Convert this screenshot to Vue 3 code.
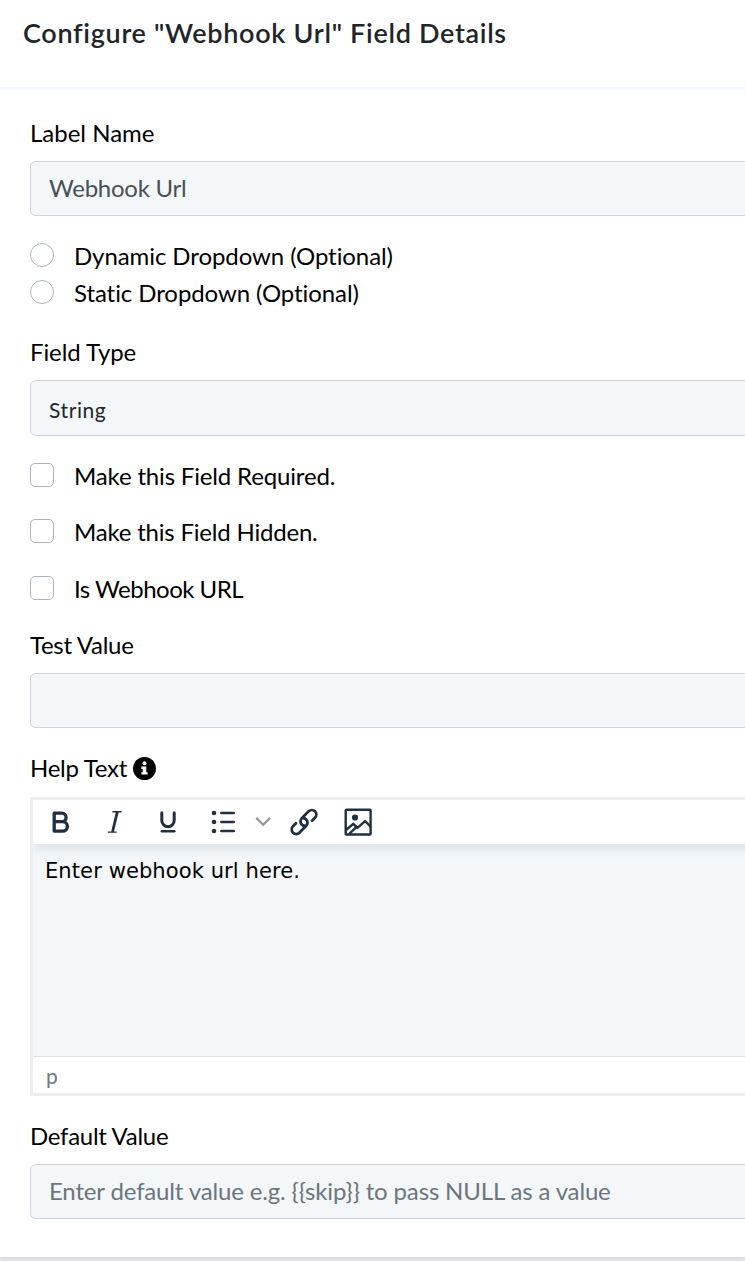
<script setup>
import { ref } from 'vue'

const labelName = ref('Webhook Url')
const testValue = ref('')
const defaultValue = ref('')
const dropdowns = [
  { id: 'dynamic', text: 'Dynamic Dropdown (Optional)' },
  { id: 'static', text: 'Static Dropdown (Optional)' },
]
const flags = [
  { id: 'required', text: 'Make this Field Required.' },
  { id: 'hidden', text: 'Make this Field Hidden.' },
  { id: 'webhook', text: 'Is Webhook URL' },
]
const placeholder = 'Enter default value e.g. {{skip}} to pass NULL as a value'
</script>

<template>
  <div class="page">
    <main class="panel">
      <header class="header">
        <h1 class="title">Configure "Webhook Url" Field Details</h1>
      </header>
      <form class="form" @submit.prevent>
        <label class="label name">Label Name</label>
        <input v-model="labelName" class="control webhook-name" type="text" />

        <div class="radios">
          <label v-for="d in dropdowns" :key="d.id" class="choice" :class="d.id">
            <input class="mark round" type="radio" name="dropdown" />
            <span>{{ d.text }}</span>
          </label>
        </div>

        <label class="label type">Field Type</label>
        <div class="control select"><span>String</span></div>

        <div class="checks">
          <label v-for="f in flags" :key="f.id" class="choice" :class="f.id">
            <input class="mark" type="checkbox" />
            <span>{{ f.text }}</span>
          </label>
        </div>

        <label class="label test">Test Value</label>
        <input v-model="testValue" class="control" type="text" />

        <div class="label help">
          <span>Help Text</span>
          <svg class="info" width="23" height="23" viewBox="0 0 22 22">
            <circle cx="11" cy="11" r="11" fill="#000" />
            <circle cx="11" cy="6" r="1.9" fill="#fff" />
            <path d="M8 9.2h4.7v5.3H14v2.2H8v-2.2h1.3v-3.1H8z" fill="#fff" />
          </svg>
        </div>

        <section class="editor">
          <div class="toolbar">
            <svg class="tool bold" viewBox="0 0 36 36">
              <path d="M12.2 9.1h7.6a4.3 4.3 0 0 1 0 8.6h-7.6zM12.2 17.7h8.5a4.7 4.7 0 0 1 0 9.4h-8.5z" fill="none" stroke="#222f3e" stroke-width="3.3" stroke-linejoin="round" />
            </svg>
            <svg class="tool" viewBox="0 0 36 36">
              <path d="M16.4 7.8h9.2M11.8 28.1h8.8" fill="none" stroke="#222f3e" stroke-width="1.4" />
              <path d="M21.3 8l-4.8 20" fill="none" stroke="#222f3e" stroke-width="2.8" />
            </svg>
            <svg class="tool" viewBox="0 0 36 36">
              <path d="M11.8 8.7v7.8a6.2 6.2 0 0 0 12.4 0V8.7" fill="none" stroke="#222f3e" stroke-width="3" stroke-linecap="round" />
              <path d="M11.9 27.3h12.4" fill="none" stroke="#222f3e" stroke-width="2.6" stroke-linecap="round" />
            </svg>
            <svg class="tool list" viewBox="0 0 36 36">
              <g fill="#222f3e"><circle cx="8" cy="9" r="2.3" /><circle cx="8" cy="18" r="2.3" /><circle cx="8" cy="27" r="2.3" /></g>
              <path d="M15.4 9h12.3M15.4 18h12.3M15.4 27h12.3" fill="none" stroke="#222f3e" stroke-width="2.6" stroke-linecap="round" />
            </svg>
            <svg class="chevron" viewBox="0 0 18 36">
              <path d="M2.3 14.9l6.9 6.9 6.9-6.9" fill="none" stroke="#90979f" stroke-width="2.2" />
            </svg>
            <svg class="tool link" viewBox="0 0 36 36">
              <g fill="none" stroke="#222f3e" stroke-width="2.7" stroke-linecap="round">
                <path d="M26 16.7l3-3a4.5 4.5 0 0 0-6.4-6.4l-7 7.2a4.5 4.5 0 0 0 3.5 7.4" />
                <path d="M10 19.3l-3 3a4.5 4.5 0 0 0 6.4 6.4l7-7.2a4.5 4.5 0 0 0-3.5-7.4" />
              </g>
            </svg>
            <svg class="tool image" viewBox="0 0 36 36">
              <rect x="5.7" y="5.7" width="24.9" height="24.8" rx="0.8" fill="none" stroke="#222f3e" stroke-width="2.4" />
              <circle cx="15" cy="13.5" r="3.1" fill="#222f3e" />
              <path d="M6 26l7.3-6.2 4.1 4.1 7.7-6.8 5.6 5.6M9 30.2l8.5-8.4" fill="none" stroke="#222f3e" stroke-width="2.4" />
            </svg>
          </div>
          <div class="content"><span>Enter webhook url here.</span></div>
          <div class="status">p</div>
        </section>

        <label class="label default">Default Value</label>
        <input v-model="defaultValue" class="control default-input" type="text" :placeholder="placeholder" />
      </form>
    </main>
  </div>
</template>

<style>
body {
  background: #e4e7eb;
  overflow: hidden;
}
</style>

<style scoped>
.page {
  height: 1261px;
  overflow: hidden;
  background: #e6e9ec;
  font-family: Lato, "Liberation Sans", sans-serif;
  font-size: 24px;
  font-variant-ligatures: none;
  color: #000;
}
.panel {
  height: 1257px;
  background: #fff;
  box-shadow: 0 1px 4px rgba(0, 0, 0, 0.1);
}
.header {
  box-sizing: border-box;
  height: 90px;
  padding: 15px 23px 0;
  border-bottom: 3px solid #eef5fd;
}
.title {
  margin: 0;
  font-size: 27px;
  line-height: 36px;
  font-weight: 600;
  letter-spacing: 0.69px;
  color: #212529;
  white-space: nowrap;
}
.form {
  display: flex;
  flex-direction: column;
  width: 760px;
  padding: 25px 0 0 30px;
  box-sizing: border-box;
}
.label {
  display: flex;
  align-items: center;
  flex: none;
  height: 36px;
  line-height: 36px;
  margin-bottom: 10px;
  white-space: nowrap;
}
.control {
  box-sizing: border-box;
  flex: none;
  width: 100%;
  height: 55px;
  margin: 0;
  padding: 0 18px 2px;
  border: 1px solid #ced4da;
  border-radius: 5px;
  outline: none;
  background: #f3f7fa;
  font: inherit;
  letter-spacing: -0.15px;
  color: #495057;
}
.webhook-name {
  letter-spacing: -0.25px;
}
.control::placeholder {
  color: #6c757d;
  opacity: 1;
}
.select {
  height: 56px;
  font-size: 21px;
  line-height: 58px;
  letter-spacing: 0.6px;
  color: #212529;
}
.radios {
  padding: 22px 0;
}
.choice {
  display: flex;
  gap: 20px;
  line-height: 36px;
  letter-spacing: -0.16px;
  white-space: nowrap;
}
.radios .choice {
  height: 37px;
  letter-spacing: -0.08px;
}
.mark {
  appearance: none;
  box-sizing: border-box;
  flex: none;
  width: 24px;
  height: 24px;
  margin: 5px 0 0;
  border: 1px solid #adb5bd;
  border-radius: 5px;
  background: #fff;
}
.round {
  border-radius: 50%;
}
.checks {
  padding: 22px 0 20px;
}
.checks .choice {
  height: 36px;
}
.checks .hidden {
  margin: 20px 0 21px;
  letter-spacing: -0.2px;
}
.checks .webhook {
  letter-spacing: -0.5px;
}
.type {
  letter-spacing: -0.1px;
}
.test,
.help,
.default {
  letter-spacing: -0.28px;
}
.help {
  margin: 22px 0 11px;
  gap: 6px;
}
.editor {
  box-sizing: border-box;
  flex: none;
  height: 299px;
  margin-bottom: 22px;
  border: 3px solid #eee;
  background: #f3f7fa;
  overflow: hidden;
}
.toolbar {
  position: relative;
  display: flex;
  align-items: flex-start;
  height: 44px;
  padding-left: 9px;
  box-sizing: border-box;
  background: #fff;
  box-shadow: 0 3px 12px rgba(34, 47, 62, 0.14);
}
.tool {
  flex: none;
  width: 36px;
  height: 36px;
  margin: 4px 18px 0 0;
}
.list {
  margin-left: 2px;
}
.chevron {
  flex: none;
  width: 18px;
  height: 36px;
  margin: 3px 14px 0 -6px;
}
.content {
  height: 212px;
  padding: 7px 12px 0;
  box-sizing: border-box;
  font-family: "DejaVu Sans", sans-serif;
  font-size: 21px;
  line-height: 40px;
  letter-spacing: 0.1px;
}
.status {
  height: 37px;
  padding: 0 13px;
  box-sizing: border-box;
  border-top: 1px solid #dee2e6;
  background: #fff;
  font-size: 21px;
  line-height: 38px;
  color: #717a84;
}
</style>
